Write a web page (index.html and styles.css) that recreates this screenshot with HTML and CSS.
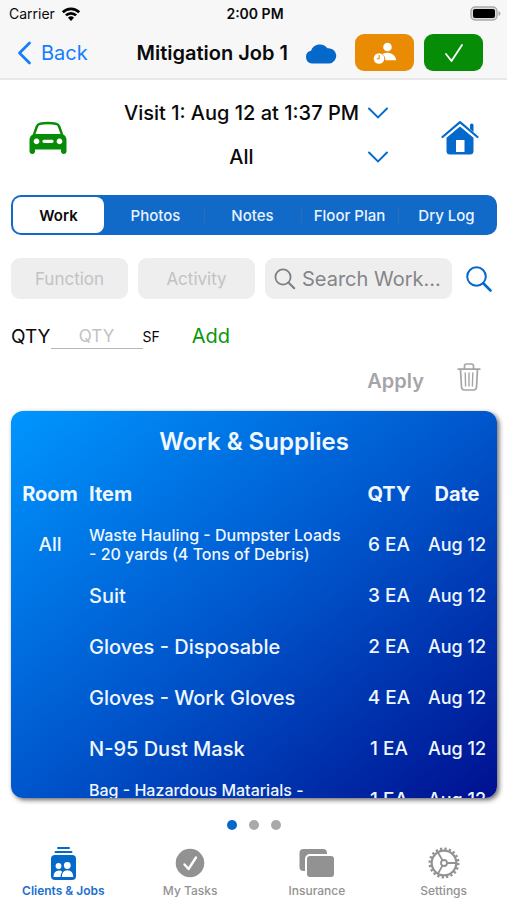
FILE: index.html
```html
<!DOCTYPE html>
<html lang="en">
<head>
<meta charset="utf-8">
<meta name="viewport" content="width=device-width, initial-scale=1">
<title>Mitigation Job 1</title>
<link rel="stylesheet" href="styles.css">
</head>
<body>
<div class="app">
  <header class="top">
    <div class="status">
      <div class="carrier">Carrier
        <svg width="20" height="16" viewBox="0 0 20 16" aria-hidden="true"><g fill="none" stroke="#000" stroke-width="2.7"><path d="M1.8 6.2a11.6 11.6 0 0 1 16.4 0"/><path d="M4.9 9.4a7.2 7.2 0 0 1 10.2 0"/></g><path d="M10 15l-3-3.2a4.3 4.3 0 0 1 6 0z"/></svg>
      </div>
      <div class="clock">2:00 PM</div>
      <div class="battery">
        <svg width="31" height="15" viewBox="0 0 31 15" aria-hidden="true"><rect x="1" y="1" width="26" height="13" rx="4" fill="#ddd" stroke="#aaa" stroke-width="1.4"/><rect x="3" y="3" width="22" height="9" rx="2"/><path d="M28.5 5v5q2-.8 2-2.500t-2-2.500z" fill="#aaa"/></svg>
      </div>
    </div>
    <nav class="navbar">
      <a class="back" href="#">
        <svg width="15" height="24" viewBox="0 0 15 24" aria-hidden="true"><path d="M12.500 2L2.500 12l10 10" fill="none" stroke="currentColor" stroke-width="2.800" stroke-linecap="round" stroke-linejoin="round"/></svg>
        Back</a>
      <h1 class="title">Mitigation Job 1</h1>
      <svg class="cloud" width="32" height="22" viewBox="0 0 32 22" aria-hidden="true"><path d="M7 21.500A6.500 6.500 0 0 1 6 8.700 9.500 9.500 0 0 1 22.500 6.200 7.700 7.700 0 0 1 24.500 21.500z" fill="#0569cc"/></svg>
      <button class="pill orange" aria-label="Assign time">
        <svg width="24" height="24" viewBox="0 0 24 24" aria-hidden="true"><g fill="#fff"><circle cx="14.500" cy="6" r="4.300"/><path d="M9.500 13q5-2.300 9.500 0 3.700 1.800 4.200 6.300H12.500q-.2-4-3-6.300z"/><circle cx="6" cy="17.500" r="5.300"/></g><path d="M6.200 14v3.800H3.800" fill="none" stroke="#e98b03" stroke-width="1.100"/></svg>
      </button>
      <button class="pill green" aria-label="Complete">
        <svg width="22" height="22" viewBox="0 0 22 22" aria-hidden="true"><path d="M3 12l5.500 7L19 3" fill="none" stroke="#fff" stroke-width="1.800" stroke-linecap="round" stroke-linejoin="round"/></svg>
      </button>
    </nav>
  </header>

  <main class="main">
    <section class="visit">
      <button class="plain" aria-label="Travel">
        <svg width="38" height="34" viewBox="0 0 38 34" aria-hidden="true"><path fill="#068c06" fill-rule="evenodd" d="M11 1.500Q19 0 27 1.500q3.300.6 4.300 3.500l3 8.500q3.200 1.500 3.200 5.500v11q0 3-2.700 3t-2.800-3v-1.500H6V30q0 3-2.700 3T.500 30V19q0-4 3.200-5.500l3-8.500Q7.700 2.100 11 1.500zM9.200 5.500L6.500 13h25l-2.700-7.500q-.5-1.300-1.900-1.600-7.900-1.400-15.800 0-1.400.3-1.900 1.600zM7.500 17.500a2.900 2.900 0 1 0 .01 0zM30.500 17.500a2.900 2.900 0 1 0 .01 0zM15 18.700a1.500 1.500 0 0 0 0 3.200h8a1.500 1.500 0 0 0 0-3.200z"/></svg>
      </button>
      <div class="pickers">
        <button class="picker"><span class="picker-text">Visit 1: Aug 12 at 1:37 PM</span>
          <svg width="20" height="12" viewBox="0 0 20 12" aria-hidden="true"><path d="M1 1.500l9 9 9-9" fill="none" stroke="#0569cc" stroke-width="1.900" stroke-linecap="round"/></svg></button>
        <button class="picker"><span class="picker-text">All</span>
          <svg width="20" height="12" viewBox="0 0 20 12" aria-hidden="true"><path d="M1 1.500l9 9 9-9" fill="none" stroke="#0569cc" stroke-width="1.900" stroke-linecap="round"/></svg></button>
      </div>
      <button class="plain" aria-label="Home">
        <svg width="38" height="36" viewBox="0 0 38 36" aria-hidden="true"><path d="M1.500 17L19 2.200 36.500 17" fill="none" stroke="#0569cc" stroke-width="2.200" stroke-linecap="round" stroke-linejoin="round"/><path d="M29 5q0-1.500 1.800-1.500T32.500 5v7L29 9z" fill="#0569cc"/><path fill="#0569cc" fill-rule="evenodd" d="M19 6.500l13.500 11.300V31q0 3.500-3.500 3.500H9q-3.500 0-3.500-3.500V17.800zM15 20v12h8.500V20z"/></svg>
      </button>
    </section>

    <div class="segments">
      <button class="seg active">Work</button>
      <button class="seg">Photos</button>
      <button class="seg ruled">Notes</button>
      <button class="seg ruled">Floor Plan</button>
      <button class="seg ruled">Dry Log</button>
    </div>

    <div class="filters">
      <input class="field" type="text" placeholder="Function" aria-label="Function">
      <input class="field" type="text" placeholder="Activity" aria-label="Activity">
      <label class="search">
        <svg width="22" height="22" viewBox="0 0 22 22" aria-hidden="true"><g fill="none" stroke="#808083" stroke-width="1.800" stroke-linecap="round"><circle cx="9" cy="9" r="7.600"/><path d="M14.700 14.700l5.500 5.500" stroke-width="2.200"/></g></svg>
        <input type="text" placeholder="Search Work..." aria-label="Search work">
      </label>
      <button class="plain" aria-label="Search">
        <svg width="26" height="26" viewBox="0 0 26 26" aria-hidden="true"><g fill="none" stroke="#0569cc" stroke-width="2" stroke-linecap="round"><circle cx="10.500" cy="10.500" r="9.300"/><path d="M17.500 17.500l7 7" stroke-width="2.600"/></g></svg>
      </button>
    </div>

    <div class="quantity">
      <label for="qty">QTY</label>
      <input id="qty" type="text" placeholder="QTY">
      <span class="unit">SF</span>
      <button class="add">Add</button>
    </div>

    <div class="actions">
      <button class="apply">Apply</button>
      <button class="plain" aria-label="Delete">
        <svg width="24" height="28" viewBox="0 0 24 28" aria-hidden="true"><g fill="none" stroke="#a5a5a7" stroke-width="1.700" stroke-linecap="round" stroke-linejoin="round"><path d="M1.200 6.200h21.600M7.500 6V3q0-2 2-2h5q2 0 2 2v3M3.500 6.500l1 17.500q.2 3 3 3h9q2.800 0 3-3l1-17.500"/><path d="M8.200 10l.4 13M12 10v13M15.800 10l-.4 13" stroke-width="1.400"/></g></svg>
      </button>
    </div>

    <section class="card">
      <h2>Work &amp; Supplies</h2>
      <table>
        <thead>
          <tr><th class="room">Room</th><th class="item">Item</th><th class="qty">QTY</th><th class="date">Date</th></tr>
        </thead>
        <tbody>
          <tr><td>All</td><td class="item long">Waste Hauling - Dumpster Loads - 20 yards (4 Tons of Debris)</td><td>6 EA</td><td class="date">Aug 12</td></tr>
          <tr><td></td><td class="item">Suit</td><td>3 EA</td><td class="date">Aug 12</td></tr>
          <tr><td></td><td class="item">Gloves - Disposable</td><td>2 EA</td><td class="date">Aug 12</td></tr>
          <tr><td></td><td class="item">Gloves - Work Gloves</td><td>4 EA</td><td class="date">Aug 12</td></tr>
          <tr><td></td><td class="item">N-95 Dust Mask</td><td>1 EA</td><td class="date">Aug 12</td></tr>
          <tr><td></td><td class="item long">Bag - Hazardous Matarials -<br>&nbsp;</td><td>1 EA</td><td class="date">Aug 12</td></tr>
        </tbody>
      </table>
    </section>
  </main>

  <div class="dots"><span class="dot on"></span><span class="dot"></span><span class="dot"></span></div>

  <nav class="tabs">
    <a class="tab on" href="#">
      <svg width="34" height="34" viewBox="0 0 34 34" aria-hidden="true"><g fill="#0569cc"><rect x="11" y="1" width="13" height="2" rx="1"/><rect x="8.500" y="5" width="18" height="2" rx="1"/><rect x="5" y="9" width="25" height="25" rx="4"/></g><g fill="#fff"><circle cx="12.500" cy="20" r="2.900"/><circle cx="21.300" cy="19.500" r="3.400"/><path d="M7.500 31q0-6.500 5.500-6.500 2 0 3.200 1.200-1.700 2-1.700 5.300zM15.800 31q0-6.800 5.600-6.800T27.300 31z"/></g></svg>
      Clients &amp; Jobs</a>
    <a class="tab" href="#">
      <svg width="34" height="34" viewBox="0 0 34 34" aria-hidden="true"><circle cx="17" cy="17" r="14.300" fill="#929292"/><path d="M11.500 18.500l4 4.500 7.500-11.500" fill="none" stroke="#fff" stroke-width="2.400" stroke-linecap="round" stroke-linejoin="round"/></svg>
      My Tasks</a>
    <a class="tab" href="#">
      <svg width="38" height="34" viewBox="0 0 38 34" aria-hidden="true"><rect x="1.500" y="3" width="27.500" height="22" rx="4" fill="#929292"/><rect x="8" y="9" width="29" height="23" rx="4" fill="#929292" stroke="#fff" stroke-width="2"/></svg>
      Insurance</a>
    <a class="tab" href="#">
      <svg width="34" height="34" viewBox="0 0 34 34" aria-hidden="true"><g fill="none" stroke="#929292"><circle cx="17" cy="17" r="14.300" stroke-width="2.400" stroke-dasharray="2.250 2.242"/><circle cx="17" cy="17" r="12.300" stroke-width="2.200"/><circle cx="17" cy="17" r="3" stroke-width="1.800"/><path d="M20 17h9M15.500 14.400L11 6.500M15.500 19.600L11 27.500" stroke-width="1.800"/></g></svg>
      Settings</a>
  </nav>
</div>
</body>
</html>
```
FILE: styles.css
```css
* { box-sizing: border-box; }

body {
  margin: 0;
  background: #fff;
  color: #0a0a0a;
  font-family: Inter, "Liberation Sans", sans-serif;
}

button, input {
  margin: 0;
  padding: 0;
  border: 0;
  background: none;
  color: inherit;
  font: inherit;
}

a { text-decoration: none; }
svg { display: block; flex: none; }

.app {
  display: flex;
  flex-direction: column;
  height: 100vh;
}

.top {
  background: #f7f7f7;
  border-bottom: 2px solid #e8e8e8;
}

.status {
  display: grid;
  grid-template-columns: 1fr auto 1fr;
  align-items: center;
  height: 27px;
  padding: 0 6px 0 9px;
  font-size: 14px;
}

.carrier { display: flex; align-items: center; gap: 6px; }
.clock { font-weight: 600; }
.battery { justify-self: end; }

.navbar {
  display: flex;
  align-items: center;
  height: 51px;
  padding: 0 24px 0 17px;
}

.back {
  display: flex;
  align-items: center;
  gap: 9px;
  color: #157efb;
  font-size: 20px;
}

.title {
  flex: 1;
  margin: 0;
  padding-right: 17px;
  font-size: 20px;
  font-weight: 600;
  text-align: right;
  white-space: nowrap;
}

.pill {
  display: flex;
  align-items: center;
  justify-content: center;
  width: 59px;
  height: 37px;
  border-radius: 9px;
}

.orange { margin-left: 18px; background: #e98b03; }
.green { margin-left: 10px; background: #078c07; }

.main {
  display: flex;
  flex: 1;
  flex-direction: column;
  min-height: 0;
  padding: 0 10px 0 11px;
}

.visit {
  display: flex;
  align-items: center;
  justify-content: space-between;
  height: 115px;
  padding: 0 18px;
}

.plain { display: block; }

.pickers {
  display: grid;
  gap: 16px;
  margin-left: 4px;
  padding-bottom: 5px;
}

.picker {
  display: flex;
  align-items: center;
  gap: 9px;
  height: 28px;
  font-size: 20px;
  font-weight: 500;
}

.picker-text { flex: 1; }

.segments {
  display: grid;
  grid-template-columns: 94fr repeat(4, 97fr);
  height: 40px;
  padding: 2px;
  background: #1169c8;
  border-radius: 10px;
}

.seg {
  border-radius: 8px;
  color: #e9f3ff;
  font-size: 15px;
  font-weight: 500;
}

.active {
  margin-right: 3px;
  background: #fff;
  color: #0a0a0a;
  font-weight: 600;
}

.ruled {
  background: linear-gradient(#2a6db9, #2a6db9) left / 1px 16px no-repeat;
}

.filters {
  display: grid;
  grid-template-columns: 117fr 117fr 191fr auto;
  align-items: center;
  gap: 10px;
  margin-top: 23px;
  padding-right: 5px;
}

.field {
  min-width: 0;
  height: 41px;
  background: #eee;
  border-radius: 9px;
  font-size: 17px;
  text-align: center;
}

.field::placeholder, .quantity input::placeholder { color: #c2c2c4; opacity: 1; }

.search {
  display: flex;
  align-items: center;
  gap: 6px;
  min-width: 0;
  height: 41px;
  margin-right: 4px;
  padding-left: 9px;
  background: #eee;
  border-radius: 9px;
  font-size: 20px;
}

.search input { flex: 1; min-width: 0; }
.search input::placeholder { color: #858588; opacity: 1; }

.quantity {
  display: flex;
  align-items: center;
  height: 28px;
  margin-top: 23px;
  font-size: 19px;
}

.quantity input {
  width: 92px;
  height: 26px;
  border-bottom: 1px solid #b8b8b8;
  font-size: 17px;
  text-align: center;
}

.unit { font-size: 14px; }
.add { margin-left: 32px; color: #0a960a; font-size: 20px; }

.actions {
  display: flex;
  align-items: flex-end;
  justify-content: flex-end;
  gap: 33px;
  height: 61px;
  padding: 0 16px 20px 0;
  color: #a5a5a7;
}

.apply { font-size: 20px; font-weight: 600; line-height: 20px; }

.card {
  flex: 1;
  min-height: 0;
  overflow: hidden;
  background: linear-gradient(to bottom right, #0096ff, #0056cc 50%, #001090);
  border-radius: 12px;
  box-shadow: 2px 2px 5px rgba(0, 0, 0, 0.6);
  color: #f0f7ff;
}

.card h2 {
  margin: 17px 0 12px;
  font-size: 24px;
  font-weight: 600;
  line-height: 28px;
  text-align: center;
}

table {
  width: 100%;
  table-layout: fixed;
  border-collapse: collapse;
  font-size: 19px;
}

th, td {
  height: 51px;
  padding: 0;
  font-weight: 500;
  text-align: center;
  white-space: nowrap;
}

th { font-size: 20px; font-weight: 700; }
.room { width: 78px; }
.qty { width: 76px; }
th.date { width: 70px; padding-right: 10px; }
td.date { padding-right: 10px; font-size: 18px; }
.item { text-align: left; }
td.item { font-size: 20px; }
td.long { font-size: 16px; line-height: 19px; white-space: normal; }

.dots {
  display: flex;
  justify-content: center;
  gap: 12px;
  margin-top: 22px;
}

.dot { width: 10px; height: 10px; border-radius: 50%; background: #a9a9a9; }
.dot.on { background: #0569cc; }

.tabs {
  display: grid;
  grid-template-columns: repeat(4, 1fr);
  height: 70px;
  padding-top: 16px;
}

.tab {
  display: flex;
  flex-direction: column;
  align-items: center;
  gap: 3px;
  color: #929292;
  font-size: 12px;
  font-weight: 500;
  line-height: 16px;
}

.tab.on { color: #1a70d0; font-weight: 600; }
```
